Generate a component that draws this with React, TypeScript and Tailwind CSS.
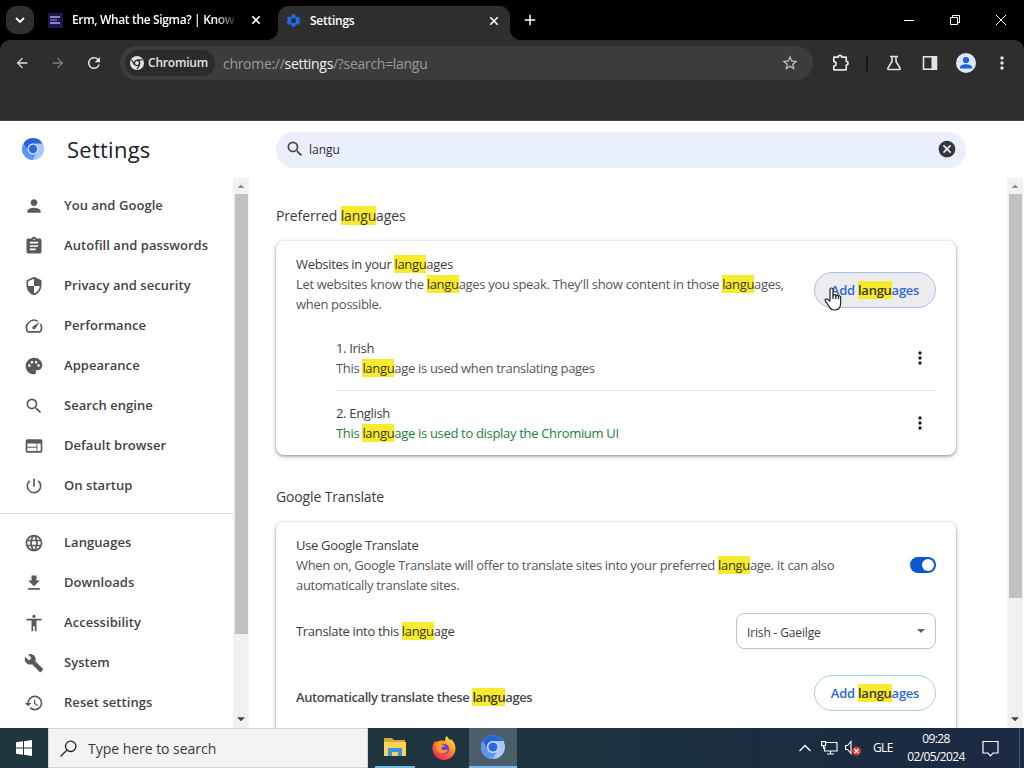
import React from 'react';
import type { IconType } from 'react-icons';
import {
  MdAccessibility,
  MdAdd,
  MdArrowBack,
  MdArrowForward,
  MdAssignment,
  MdBuild,
  MdCancel,
  MdFileDownload,
  MdLanguage,
  MdMoreVert,
  MdPalette,
  MdPerson,
  MdPowerSettingsNew,
  MdRefresh,
  MdRestore,
  MdSearch,
  MdSecurity,
  MdSpeed,
  MdStarOutline,
  MdWeb,
} from 'react-icons/md';

interface MenuItem {
  label: string;
  icon: IconType;
}

const mainMenu: MenuItem[] = [
  { label: 'You and Google', icon: MdPerson },
  { label: 'Autofill and passwords', icon: MdAssignment },
  { label: 'Privacy and security', icon: MdSecurity },
  { label: 'Performance', icon: MdSpeed },
  { label: 'Appearance', icon: MdPalette },
  { label: 'Search engine', icon: MdSearch },
  { label: 'Default browser', icon: MdWeb },
  { label: 'On startup', icon: MdPowerSettingsNew },
];

const advancedMenu: MenuItem[] = [
  { label: 'Languages', icon: MdLanguage },
  { label: 'Downloads', icon: MdFileDownload },
  { label: 'Accessibility', icon: MdAccessibility },
  { label: 'System', icon: MdBuild },
  { label: 'Reset settings', icon: MdRestore },
];

const QUERY = 'langu';

// Marks every occurrence of the search query in the text
const Highlight: React.FC<{ text: string }> = ({ text }) => {
  const parts = text.split(QUERY);
  return (
    <>
      {parts.map((part, i) => (
        <React.Fragment key={i}>
          {i > 0 && <mark className="bg-[#f8ea2f] text-[#3c3a20]">{QUERY}</mark>}
          {part}
        </React.Fragment>
      ))}
    </>
  );
};

const ChromiumLogo: React.FC<{ className?: string }> = ({ className }) => (
  <svg viewBox="0 0 24 24" className={className}>
    <circle cx="12" cy="12" r="12" fill="#a9c7fa" />
    <path d="M1.6 6A12 12 0 0 1 22.4 6H12a6 6 0 0 0-5.6 8.2z" fill="#2a62d6" />
    <path d="M1.6 6A12 12 0 0 0 11.5 24l5-8.600A6 6 0 0 1 6.600 14.600z" fill="#5c95f5" />
    <circle cx="12" cy="12" r="6" fill="#cfe0fd" />
    <circle cx="12" cy="12" r="4.600" fill="#2b6be0" />
  </svg>
);

const TabClose: React.FC = () => (
  <svg viewBox="0 0 14 14" className="ml-[7px] size-3.5" fill="none" stroke="currentColor" strokeWidth="1.600">
    <path d="M3.300 3.300l7.400 7.400M10.700 3.300l-7.400 7.400" />
  </svg>
);

const TabStrip: React.FC = () => (
  <div className="flex h-10 shrink-0 items-end bg-black text-white">
    <div className="mb-1.5 ml-1.5 flex size-7 items-center justify-center rounded-[10px] bg-[#2f2f2f]">
      <svg viewBox="0 0 16 16" className="size-4" fill="none" stroke="currentColor" strokeWidth="1.800">
        <path d="M4 6l4 4 4-4" />
      </svg>
    </div>
    <div className="ml-[14px] flex h-10 w-[230px] items-center">
      <div className="flex size-[15px] flex-col justify-center gap-px bg-[#19194f] px-[2px]">
        <span className="h-[2px] w-[10px] bg-[#8788bd]" />
        <span className="h-[2px] w-[7px] bg-[#55568f]" />
        <span className="h-[2px] w-[10px] bg-[#8788bd]" />
      </div>
      <span className="ml-[9px] w-[170px] text-[12px] font-semibold tracking-[-0.35px] whitespace-nowrap [mask-image:linear-gradient(to_right,black_84%,transparent_98%)]">
        Erm, What the Sigma? | Know
      </span>
      <TabClose />
    </div>
    <div className="relative flex h-[34px] w-[232px] items-center rounded-t-[10px] bg-[#2e2e2e] pb-[5px]">
      <div className="absolute bottom-0 -left-2.5 size-2.5 bg-[radial-gradient(circle_at_0_0,#000_9.5px,#2e2e2e_10px)]" />
      <div className="absolute -right-2.5 bottom-0 size-2.5 bg-[radial-gradient(circle_at_100%_0,#000_9.5px,#2e2e2e_10px)]" />
      <svg viewBox="0 0 24 24" className="ml-2 size-[15px] text-[#1a6de0]" fill="currentColor" fillRule="evenodd">
        <path d="M9.500 2h5l.8 3 2.200 1.200 3-.8 2.500 4.300-2.300 2.300 2.300 2.300-2.500 4.300-3-.8-2.200 1.200-.8 3h-5l-.8-3-2.200-1.200-3 .8L1 14.300l2.300-2.300L1 9.700l2.500-4.300 3 .8L8.700 5zM12 8a4 4 0 1 0 0 8 4 4 0 0 0 0-8z" />
      </svg>
      <span className="mt-px ml-[9px] w-[170px] text-[12px] font-semibold tracking-[-0.25px]">Settings</span>
      <TabClose />
    </div>
    <MdAdd className="mb-[11px] ml-[11px] size-[18px]" />
    <div className="mr-[17px] mb-[14px] ml-auto flex items-center gap-[34px]">
      <svg viewBox="0 0 12 12" className="size-3" fill="none" stroke="currentColor">
        <path d="M1 6.500h10" />
      </svg>
      <svg viewBox="0 0 12 12" className="size-3" fill="none" stroke="currentColor">
        <path d="M1.500 3.500h7v7h-7zM3.500 3.500v-2h7v7h-2" />
      </svg>
      <svg viewBox="0 0 12 12" className="size-3" fill="none" stroke="currentColor">
        <path d="M1 1l10 10M11 1L1 11" />
      </svg>
    </div>
  </div>
);

const Toolbar: React.FC = () => (
  <div className="bg-black">
    <div className="h-[81px] shrink-0 rounded-t-[10px] border-b border-[#4a484b] bg-[#2e2e2e]">
      <div className="flex h-[46px] items-center text-[#e3e3e3]">
        <MdArrowBack className="ml-[14px] size-4" />
        <MdArrowForward className="ml-5 size-4 text-[#7d7d7d]" />
        <MdRefresh className="ml-[19px] size-[18px]" />
        <div className="ml-[17px] flex h-[34px] w-[693px] items-center rounded-full bg-[#3c3c3c] pl-[5px]">
          <div className="flex h-[26px] w-[90px] items-center rounded-full bg-[#2b2b2b] pl-[5px]">
            <svg viewBox="0 0 24 24" className="size-[14px]" fill="none">
              <circle cx="12" cy="12" r="12" fill="#e3e3e3" />
              <circle cx="12" cy="12" r="4.500" stroke="#2b2b2b" strokeWidth="2.400" />
              <path d="M12 6.500h9.500M7.400 14.800L2.600 6.500M16.600 14.800L12 22.800" stroke="#2b2b2b" strokeWidth="2" />
            </svg>
            <span className="ml-1 text-[12px] font-semibold tracking-[-0.2px]">Chromium</span>
          </div>
          <span className="ml-2 text-[14px] tracking-[-0.3px] text-[#9b9b9b]">
            chrome://<span className="text-[#f2f2f2]">settings</span>/?search=langu
          </span>
          <MdStarOutline className="mr-[14px] ml-auto size-[18px] text-[#c7c7c7]" />
        </div>
        <svg viewBox="0 0 18 18" className="ml-[19px] size-[18px]" fill="none" stroke="currentColor" strokeWidth="1.700" strokeLinejoin="round">
          <path d="M1.800 3.200h4.400a1.800 1.800 0 0 1 3.600 0h4.400v4.200a1.800 1.800 0 0 1 0 3.600v4.800H1.800v-3.800a2.200 2.200 0 0 0 0-4.400z" />
        </svg>
        <div className="ml-4 h-4 w-[2px] bg-[#151515]" />
        <svg viewBox="0 0 16 16" className="ml-[18px] size-4" fill="none" stroke="currentColor" strokeWidth="1.600">
          <path d="M4 1.500h8M6 1.500v5L1.900 13.200c-.4.700 0 1.300.7 1.300h10.800c.7 0 1.100-.6.700-1.300L10 6.500v-5" />
        </svg>
        <svg viewBox="0 0 16 16" className="ml-5 size-4" fill="none" stroke="currentColor" strokeWidth="1.600">
          <rect x="1.500" y="1.800" width="13" height="12.400" />
          <path d="M9.500 2h5v12h-5z" fill="currentColor" stroke="none" />
        </svg>
        <svg viewBox="0 0 20 20" className="ml-[18px] size-5">
          <circle cx="10" cy="10" r="10" fill="#dbe7fc" />
          <circle cx="10" cy="7" r="3.100" fill="#1a62d6" />
          <path d="M4 15.500v-1.200c0-2 3.500-3 6-3s6 1 6 3v1.200z" fill="#1a62d6" />
        </svg>
        <MdMoreVert className="ml-[16px] size-5" />
      </div>
    </div>
  </div>
);

const ScrollBar: React.FC<{ thumbClass: string }> = ({ thumbClass }) => (
  <div className="flex w-4 shrink-0 flex-col items-center bg-[#f1f1f1]">
    <svg viewBox="0 0 16 16" className="size-4 shrink-0" fill="#8f8f8f">
      <path d="M4.500 10L8 6.500l3.500 3.500z" />
    </svg>
    <div className={`w-[13px] bg-[#c1c1c1] ${thumbClass}`} />
    <svg viewBox="0 0 16 16" className="mt-auto size-[18px] shrink-0" fill="#444">
      <path d="M4.500 6.500h7L8 10z" />
    </svg>
  </div>
);

const MenuList: React.FC<{ items: MenuItem[] }> = ({ items }) => (
  <ul>
    {items.map(({ label, icon: Icon }) => (
      <li key={label} className="flex h-10 items-center pl-6 text-[13px] font-semibold tracking-[0.05px] text-[#434345]">
        <Icon className="mb-px size-5 text-[#58595b]" />
        <span className="ml-5">{label}</span>
      </li>
    ))}
  </ul>
);

const SideBar: React.FC = () => (
  <aside className="flex w-[249px] shrink-0 flex-col">
    <div className="flex h-[57px] shrink-0 items-center pl-[22px]">
      <ChromiumLogo className="mb-[2px] size-[22px]" />
      <h1 className="ml-[23px] text-[22px] font-medium tracking-[0.25px] text-[#202124]">Settings</h1>
    </div>
    <div className="flex min-h-0 flex-1">
      <nav className="min-w-0 flex-1 overflow-hidden pt-2">
        <MenuList items={mainMenu} />
        <div className="mt-[7px] mb-[9px] h-px bg-[#dfdfdf]" />
        <MenuList items={advancedMenu} />
      </nav>
      <ScrollBar thumbClass="h-[440px]" />
    </div>
  </aside>
);

const AddButton: React.FC<{ hovered?: boolean }> = ({ hovered }) => (
  <button
    className={`h-9 w-[122px] shrink-0 rounded-full border text-[13px] font-semibold tracking-[-0.25px] text-[#2f68cc] ${
      hovered ? 'border-[#a9c0ea] bg-[#ececee]' : 'border-[#a6cdea] bg-white'
    }`}
  >
    <Highlight text="Add languages" />
  </button>
);

const LanguageRow: React.FC<{ name: string; note: string; noteClass: string }> = ({ name, note, noteClass }) => (
  <div className="flex h-[65px] items-center last:h-16">
    <div className="flex-1">
      <p>{name}</p>
      <p className={noteClass}>
        <Highlight text={note} />
      </p>
    </div>
    <MdMoreVert className="mr-1.5 size-5 text-[#202124]" />
  </div>
);

const HandCursor: React.FC = () => (
  <svg
    viewBox="0 0 18 24"
    className="absolute top-[46px] left-[548px] h-6 w-[18px]"
    fill="#fff"
    stroke="#222"
    strokeWidth="1.200"
    strokeLinejoin="round"
  >
    <path d="M6 14V2.500a1.500 1.500 0 0 1 3 0V9c0-2 2.800-1.800 2.800.2 0-1.600 2.600-1.400 2.600.5 0-1.300 2.300-1.100 2.300.7v5c0 4.500-2 7.600-6.200 7.600-3.500 0-4.700-1.800-6-4.500L1.200 13.800c-.5-1.700 1.300-2.300 2.400-1.200z" />
    <path d="M9 8.500V12M11.800 9v3M14.400 10v2" fill="none" />
  </svg>
);

const cardClass = 'relative rounded-lg bg-white px-5 pt-[13px] shadow-[0_1px_3px_rgba(60,64,67,0.550),0_2px_6px_rgba(60,64,67,0.150)]';

const SettingsContent: React.FC = () => (
  <main className="min-w-0 flex-1 overflow-hidden pl-[27px] text-[13px] leading-5 tracking-[-0.32px] text-[#3b3c3e]">
    <h2 className="mt-[28px] text-[14px] font-normal tracking-[-0.14px]">
      <Highlight text="Preferred languages" />
    </h2>
    <section className={`mt-[15px] h-[214px] w-[680px] ${cardClass}`}>
      <div className="flex h-[72px]">
        <div className="flex-1 whitespace-nowrap">
          <p>
            <Highlight text="Websites in your languages" />
          </p>
          <p className="text-[#555658]">
            <Highlight text="Let websites know the languages you speak. They'll show content in those languages," />
            <br />
            when possible.
          </p>
        </div>
        <div className="pt-[18px]">
          <AddButton hovered />
        </div>
      </div>
      <div className="ml-10 divide-y divide-[#e8e8e8]">
        <LanguageRow name="1. Irish" note="This language is used when translating pages" noteClass="text-[#555658]" />
        <LanguageRow name="2. English" note="This language is used to display the Chromium UI" noteClass="text-[#1c8043]" />
      </div>
      <HandCursor />
    </section>
    <h2 className="mt-[32px] text-[14px] font-normal tracking-[-0.14px]">Google Translate</h2>
    <section className={`mt-[15px] h-[260px] w-[680px] ${cardClass}`}>
      <div className="flex">
        <div className="flex-1 whitespace-nowrap">
          <p>Use Google Translate</p>
          <p className="text-[#555658]">
            <Highlight text="When on, Google Translate will offer to translate sites into your preferred language. It can also" />
            <br />
            automatically translate sites.
          </p>
        </div>
        <div className="mt-[22px] flex h-4 w-[26px] items-center justify-end rounded-full bg-[#0b57d0] pr-[2px]">
          <span className="size-3 rounded-full bg-white" />
        </div>
      </div>
      <div className="mt-[18px] flex items-center justify-between">
        <p>
          <Highlight text="Translate into this language" />
        </p>
        <div className="flex h-9 w-[200px] items-center justify-between rounded-lg border border-[#c4c5c7] pr-[10px] pl-[10px] text-[12px] tracking-[-0.15px]">
          <span className="pt-[3px]">Irish - Gaeilge</span>
          <svg viewBox="0 0 8 4" className="h-1 w-2" fill="#5f6062">
            <path d="M0 0h8L4 4z" />
          </svg>
        </div>
      </div>
      <div className="mt-[26px] flex items-center justify-between">
        <p className="pt-2 font-semibold tracking-[-0.4px] text-[#48494b]">
          <Highlight text="Automatically translate these languages" />
        </p>
        <AddButton />
      </div>
    </section>
  </main>
);

const FolderIcon: React.FC = () => (
  <svg viewBox="0 0 22 20" className="h-5 w-[22px]">
    <path d="M0 1h8l2 2h11v5H0z" fill="#e0a52c" />
    <path d="M0 5h22v14H0z" fill="#fbd25c" />
    <path d="M4 19v-6.500c0-.8.600-1.500 1.500-1.500h11c.9 0 1.500.7 1.500 1.500V19h-4v-4H8v4z" fill="#3b93d8" />
  </svg>
);

const FirefoxIcon: React.FC = () => (
  <svg viewBox="0 0 24 24" className="size-6">
    <defs>
      <linearGradient id="fx" x1="0.800" y1="0.050" x2="0.250" y2="0.950">
        <stop offset="0" stopColor="#ffe34a" />
        <stop offset="0.450" stopColor="#ff8a25" />
        <stop offset="1" stopColor="#f5245b" />
      </linearGradient>
    </defs>
    <path d="M14.500 0c2 1.600 2.300 3.400 4.300 4.300.1-.8 0-1.300 0-1.300 2.700 2 4.700 5.500 4.700 9.300a11.500 11.500 0 0 1-23 .3C.400 9.500 1.600 6.800 3.600 4.500l.4 2c1-1 2.300-1.700 4-1.800 2-.2 3.800-.1 4.800.6.500-2 .4-3.500 1.700-5.300z" fill="url(#fx)" />
    <circle cx="12" cy="13" r="5.200" fill="#7a3be0" />
    <path d="M4 7.500c2-1 4.500-.6 6 1 1.300.2 2.700.4 2.700 1.300 0 1-2.500.9-3.200 2-.4.900.6 2.600 2.700 2.400 1.600-.2 2.500-.9 3.700-.3-1 2.600-4 4.100-6.900 3.300C5.500 16.200 3.200 12 4 7.500z" fill="#ff9a2a" />
  </svg>
);

const TaskBar: React.FC = () => (
  <footer className="flex h-10 shrink-0 items-stretch bg-linear-to-r from-[#20363f] from-40% via-[#1a2f40] via-65% to-[#1c2a43] text-white">
    <div className="flex w-12 items-center justify-center">
      <svg viewBox="0 0 16 16" className="size-4" fill="#fff">
        <path d="M0 2.300l7-1v6.200H0zM8 1.200L16 0v7.500H8zM0 8.500h7v6.200l-7-1zM8 8.500h8V16l-8-1.200z" />
      </svg>
    </div>
    <div className="flex w-80 items-center border border-[#d0d3d4] bg-[#f3f3f3] pl-[11px] text-[#3a3a3a]">
      <svg viewBox="0 0 17 17" className="size-[17px]" fill="none" stroke="#222" strokeWidth="1.300">
        <circle cx="10.700" cy="6.300" r="5.200" />
        <path d="M7 10L.5 16.500" />
      </svg>
      <span className="ml-[11px] text-[14px] tracking-[-0.03px]">Type here to search</span>
    </div>
    <div className="ml-[7px] flex w-10 items-center justify-center border-b-2 border-[#76b9ed]">
      <FolderIcon />
    </div>
    <div className="ml-[5px] flex w-12 items-center justify-center">
      <FirefoxIcon />
    </div>
    <div className="ml-px flex w-12 items-center justify-center border-b-2 border-[#76b9ed] bg-[#4a5e69]">
      <ChromiumLogo className="size-6" />
    </div>
    <div className="ml-auto flex items-center">
      <svg viewBox="0 0 12 8" className="h-2 w-3" fill="none" stroke="#fff" strokeWidth="1.300">
        <path d="M.5 7L6 1.500 11.500 7" />
      </svg>
      <svg viewBox="0 0 17 14" className="ml-[10px] h-3.5 w-[17px]" fill="none" stroke="#fff" strokeWidth="1.100">
        <path d="M5 1.500h11v8.500H3.500V6M6 13h7M9.500 10v3M.6.600h4v4h-4zM2.600 4.600v2.500h2" />
      </svg>
      <svg viewBox="0 0 17 16" className="ml-[7px] h-4 w-[17px]">
        <path d="M.6 5.500h2L6 1.500v12l-3.400-4h-2z" fill="none" stroke="#fff" strokeWidth="1.100" />
        <circle cx="11.500" cy="11" r="4.500" fill="#d9363e" />
        <path d="M9.500 9l4 4M13.500 9l-4 4" stroke="#fff" strokeWidth="1.200" />
      </svg>
      <span className="ml-[11px] w-5 text-[12px] tracking-[-0.6px]">GLE</span>
      <div className="ml-[13px] w-[60px] text-center text-[12px] leading-[18px] tracking-[-0.6px]">
        <p>09:28</p>
        <p>02/05/2024</p>
      </div>
      <svg viewBox="0 0 17 17" className="mr-5 ml-[16px] size-[17px]" fill="none" stroke="#fff" strokeWidth="1.200">
        <path d="M1 1.500h15v11.500h-5L8.500 15.800 6 13H1z" />
      </svg>
      <div className="mr-1 h-10 w-px bg-[#4a566b]" />
    </div>
  </footer>
);

const App: React.FC = () => {
  return (
    <div className="flex h-[768px] w-[1024px] flex-col overflow-hidden bg-white font-['Open_Sans','Noto_Sans',sans-serif]">
      <TabStrip />
      <Toolbar />
      <div className="flex min-h-0 flex-1">
        <SideBar />
        <div className="flex min-w-0 flex-1 flex-col">
          <div className="flex h-[57px] shrink-0 items-center pl-[27px]">
            <div className="flex h-9 w-[690px] items-center rounded-full bg-[#e9effb] pr-[9px] pl-[9px] text-[#2b2b33]">
              <MdSearch className="mb-[2px] size-5 text-[#474747]" />
              <span className="ml-1 text-[12px]">{QUERY}</span>
              <MdCancel className="mb-[2px] ml-auto size-5 text-[#33373d]" />
            </div>
          </div>
          <div className="flex min-h-0 flex-1">
            <SettingsContent />
            <ScrollBar thumbClass="h-[404px]" />
            <div className="w-px shrink-0" />
          </div>
        </div>
      </div>
      <TaskBar />
    </div>
  );
};

export default App;
